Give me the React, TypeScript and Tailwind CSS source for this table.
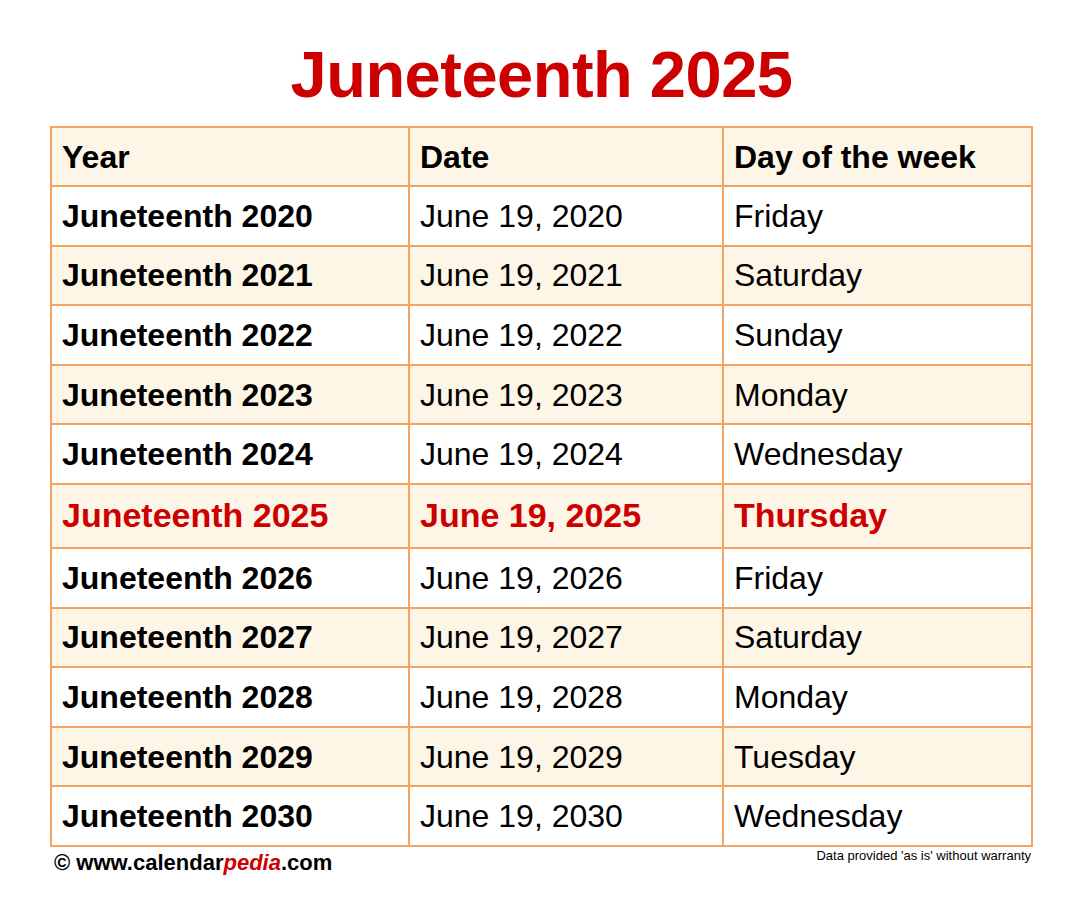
const rows = [
  { year: "Juneteenth 2020", date: "June 19, 2020", day: "Friday" },
  { year: "Juneteenth 2021", date: "June 19, 2021", day: "Saturday" },
  { year: "Juneteenth 2022", date: "June 19, 2022", day: "Sunday" },
  { year: "Juneteenth 2023", date: "June 19, 2023", day: "Monday" },
  { year: "Juneteenth 2024", date: "June 19, 2024", day: "Wednesday" },
  { year: "Juneteenth 2025", date: "June 19, 2025", day: "Thursday", current: true },
  { year: "Juneteenth 2026", date: "June 19, 2026", day: "Friday" },
  { year: "Juneteenth 2027", date: "June 19, 2027", day: "Saturday" },
  { year: "Juneteenth 2028", date: "June 19, 2028", day: "Monday" },
  { year: "Juneteenth 2029", date: "June 19, 2029", day: "Tuesday" },
  { year: "Juneteenth 2030", date: "June 19, 2030", day: "Wednesday" },
];

export default function App() {
  return (
    <main className="w-[1083px] h-[923px] bg-white font-['Liberation_Sans',Arial,sans-serif] text-black">
      <h1 className="pt-[42px] text-center text-[65px] leading-[65px] tracking-[-0.5px] font-bold text-[#cc0000]">
        Juneteenth 2025
      </h1>

      <div className="ml-[50px] mt-[19px] w-[981px]">
        <table className="w-full border-collapse border-2 border-[#f4a460] table-fixed">
          <colgroup>
            <col className="w-[358px]" />
            <col className="w-[314px]" />
            <col className="w-[309px]" />
          </colgroup>
          <thead>
            <tr className="h-[59px] bg-[#fdf5e6] text-[32px] font-bold">
              <th className="border-2 border-[#f4a460] pl-[10px] text-left">Year</th>
              <th className="border-2 border-[#f4a460] pl-[10px] text-left">Date</th>
              <th className="border-2 border-[#f4a460] pl-[10px] text-left">Day of the week</th>
            </tr>
          </thead>
          <tbody>
            {rows.map((row, i) => (
              <tr
                key={row.year}
                className={
                  (i % 2 === 1 ? "bg-[#fdf5e6] " : "bg-white ") +
                  (row.current ? "h-[64px] text-[34px] font-bold text-[#cc0000]" : "h-[59.6px] text-[32px]")
                }
              >
                <td className="border-2 border-[#f4a460] pl-[10px] font-bold">{row.year}</td>
                <td className="border-2 border-[#f4a460] pl-[10px]">{row.date}</td>
                <td className="border-2 border-[#f4a460] pl-[10px]">{row.day}</td>
              </tr>
            ))}
          </tbody>
        </table>

        <div className="flex items-start justify-between">
          <p className="pt-[3px] pl-[4px] text-[22px] leading-[26px] font-bold">
            © www.calendar<span className="italic text-[#cc0000]">pedia</span>.com
          </p>
          <p className="pt-[1px] text-[13px] leading-[16px]">Data provided 'as is' without warranty</p>
        </div>
      </div>
    </main>
  );
}
